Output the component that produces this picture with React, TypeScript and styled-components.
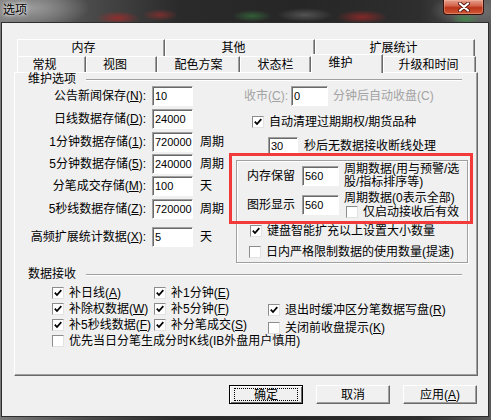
import React from 'react'
import styled, { createGlobalStyle } from 'styled-components'

const GlobalStyle = createGlobalStyle`
  html, body {
    margin: 0;
    padding: 0;
    background: #262626;
  }
  body {
    font-family: 'Liberation Sans', 'Noto Sans CJK SC', sans-serif;
    font-size: 12px;
    color: #000;
  }
  * {
    box-sizing: border-box;
  }
`

type Field = {
  label: string
  hotkey: string
  value: string
  unit?: string
  mt: number
}

const fields: Field[] = [
  { label: '公告新闻保存', hotkey: 'N', value: '10', mt: 0 },
  { label: '日线数据存储', hotkey: 'D', value: '24000', mt: 3 },
  { label: '1分钟数据存储', hotkey: '1', value: '720000', unit: '周期', mt: 3 },
  { label: '5分钟数据存储', hotkey: '5', value: '240000', unit: '周期', mt: 2 },
  { label: '分笔成交存储', hotkey: 'M', value: '100', unit: '天', mt: 2 },
  { label: '5秒线数据存储', hotkey: 'Z', value: '720000', unit: '周期', mt: 3 },
  { label: '高频扩展统计数据', hotkey: 'X', value: '5', unit: '天', mt: 8 },
]

const backTabs = [
  { name: '内存', w: 148, pr: 15 },
  { name: '其他', w: 150, pr: 13 },
  { name: '扩展统计', w: 160, pr: 3 },
]

const frontTabs = [
  { name: '常规', w: 69, pr: 14 },
  { name: '视图', w: 71, pr: 13 },
  { name: '配色方案', w: 83, pr: 0 },
  { name: '状态栏', w: 71, pr: 0 },
  { name: '维护', w: 72, pr: 13, active: true },
  { name: '升级和时间', w: 93, pr: 2 },
]

// text with an underlined access key, like 补日线(A)
const withKey = (text: string, key?: string) =>
  key ? (
    <>
      {text}(<u>{key}</u>)
    </>
  ) : (
    text
  )

function CheckMark() {
  return (
    <svg width='8' height='8' viewBox='0 0 8 8'>
      <path d='M0.8 3.6 L3 6 L7.3 1.2' fill='none' stroke='#000' strokeWidth='1.8' />
    </svg>
  )
}

function CheckBox({ checked, children }: { checked?: boolean; children?: React.ReactNode }) {
  return (
    <>
      <Box>{checked && <CheckMark />}</Box>
      {children && <CheckText>{children}</CheckText>}
    </>
  )
}

function CloseGlyph() {
  return (
    <svg width='14' height='10' viewBox='0 0 14 10'>
      <path d='M3 1.5 L11 8.5 M11 1.5 L3 8.5' stroke='#5a1a10' strokeWidth='4' strokeLinecap='round' />
      <path d='M3 1.5 L11 8.5 M11 1.5 L3 8.5' stroke='#fff' strokeWidth='2.2' strokeLinecap='round' />
    </svg>
  )
}

export default function App() {
  return (
    <>
      <GlobalStyle />
      <Window>
        <TitleBar>
          <Title>选项</Title>
          <CloseButton>
            <CloseGlyph />
          </CloseButton>
        </TitleBar>
        <Client>
          <TabControl>
            <TabRow $h={17}>
              {backTabs.map((t) => (
                <Tab key={t.name} $w={t.w} $pr={t.pr}>
                  {t.name}
                </Tab>
              ))}
            </TabRow>
            <TabRow $h={16}>
              {frontTabs.map((t) =>
                t.active ? (
                  <ActiveTab key={t.name} $w={t.w} $pr={t.pr}>
                    {t.name}
                  </ActiveTab>
                ) : (
                  <Tab key={t.name} $w={t.w} $pr={t.pr}>
                    {t.name}
                  </Tab>
                ),
              )}
            </TabRow>
            <Panel>
              <SectionHeader $mt={0}>
                <SectionLabel>维护选项</SectionLabel>
                <SectionLine />
              </SectionHeader>
              <Body>
                <LeftCol>
                  {fields.map((f) => (
                    <FieldRow key={f.label} $mt={f.mt}>
                      <FieldLabel>
                        {withKey(f.label, f.hotkey)}:
                      </FieldLabel>
                      <TextBox $w={41} $h={20} $ml={6} readOnly value={f.value} />
                      {f.unit && <Unit>{f.unit}</Unit>}
                    </FieldRow>
                  ))}
                </LeftCol>
                <RightCol>
                  <DisabledRow>
                    <DisabledLabel>{withKey('收市', 'C')}:</DisabledLabel>
                    <TextBox $w={37} $h={20} $ml={0} readOnly value='0' />
                    <DisabledText>分钟后自动收盘(C)</DisabledText>
                  </DisabledRow>
                  <CheckRow $mt={8} $pl={16}>
                    <CheckBox checked>自动清理过期期权/期货品种</CheckBox>
                  </CheckRow>
                  <TimeoutRow>
                    <TextBox $w={30} $h={18} $ml={0} readOnly value='30' />
                    <Unit $ml={6}>秒后无数据接收断线处理</Unit>
                  </TimeoutRow>
                  <InnerBox>
                    <MemRow $h={26} $mt={0}>
                      <MemLabel>内存保留</MemLabel>
                      <TextBox $w={37} $h={20} $ml={0} readOnly value='560' />
                      <Note $lh={13}>
                        <div>周期数据(用与预警/选</div>
                        <div>股/指标排序等)</div>
                      </Note>
                    </MemRow>
                    <MemRow $h={28} $mt={2}>
                      <MemLabel>图形显示</MemLabel>
                      <TextBox $w={37} $h={20} $ml={0} readOnly value='560' />
                      <Note $lh={14}>
                        <div>周期数据(0表示全部)</div>
                        <NoteCheck>
                          <CheckBox>仅启动接收后有效</CheckBox>
                        </NoteCheck>
                      </Note>
                    </MemRow>
                    <CheckRow $mt={4} $pl={13}>
                      <CheckBox checked>键盘智能扩充以上设置大小数量</CheckBox>
                    </CheckRow>
                    <CheckRow $mt={5} $pl={12}>
                      <CheckBox>日内严格限制数据的使用数量(提速)</CheckBox>
                    </CheckRow>
                  </InnerBox>
                  <Highlight />
                </RightCol>
              </Body>
              <SectionHeader $mt={5}>
                <SectionLabel>数据接收</SectionLabel>
                <SectionLine />
              </SectionHeader>
              <CheckArea>
                <CheckCol $w={102} $mt={0}>
                  <CheckItem $h={16}>
                    <CheckBox checked>{withKey('补日线', 'A')}</CheckBox>
                  </CheckItem>
                  <CheckItem $h={16}>
                    <CheckBox checked>{withKey('补除权数据', 'W')}</CheckBox>
                  </CheckItem>
                  <CheckItem $h={16}>
                    <CheckBox checked>{withKey('补5秒线数据', 'F')}</CheckBox>
                  </CheckItem>
                  <CheckItem $h={16}>
                    <CheckBox>优先当日分笔生成分时K线(IB外盘用户慎用)</CheckBox>
                  </CheckItem>
                </CheckCol>
                <CheckCol $w={114} $mt={0}>
                  <CheckItem $h={16}>
                    <CheckBox checked>{withKey('补1分钟', 'E')}</CheckBox>
                  </CheckItem>
                  <CheckItem $h={16}>
                    <CheckBox checked>{withKey('补5分钟', 'F')}</CheckBox>
                  </CheckItem>
                  <CheckItem $h={16}>
                    <CheckBox checked>{withKey('补分笔成交', 'S')}</CheckBox>
                  </CheckItem>
                </CheckCol>
                <CheckCol $w={190} $mt={16}>
                  <CheckItem $h={18}>
                    <CheckBox checked>{withKey('退出时缓冲区分笔数据写盘', 'R')}</CheckBox>
                  </CheckItem>
                  <CheckItem $h={18}>
                    <CheckBox>{withKey('关闭前收盘提示', 'K')}</CheckBox>
                  </CheckItem>
                </CheckCol>
              </CheckArea>
            </Panel>
          </TabControl>
          <ButtonRow>
            <Button $isDefault>
              <FocusRect>确定</FocusRect>
            </Button>
            <Button>取消</Button>
            <Button>{withKey('应用', 'A')}</Button>
          </ButtonRow>
        </Client>
      </Window>
    </>
  )
}

const Window = styled.div`
  width: 491px;
  height: 420px;
  display: flex;
  flex-direction: column;
  padding: 0 2px 3px 1px;
  background:
    radial-gradient(ellipse 22px 7px at 118px 18px, rgba(170, 40, 40, 0.75), transparent),
    radial-gradient(ellipse 18px 6px at 160px 15px, rgba(170, 45, 45, 0.6), transparent),
    radial-gradient(ellipse 20px 6px at 252px 16px, rgba(60, 140, 70, 0.55), transparent),
    radial-gradient(ellipse 28px 7px at 305px 15px, rgba(120, 120, 120, 0.55), transparent),
    radial-gradient(ellipse 26px 7px at 362px 17px, rgba(170, 40, 40, 0.7), transparent),
    radial-gradient(ellipse 14px 6px at 465px 19px, rgba(60, 150, 70, 0.7), transparent),
    radial-gradient(ellipse 60px 20px at 30px 8px, rgba(160, 160, 160, 0.9), transparent),
    radial-gradient(ellipse 40px 16px at 470px 10px, rgba(130, 130, 130, 0.8), transparent),
    linear-gradient(90deg, #7a7a7a 0, #4a4a4a 90px, #2a2a2a 180px, #262626 300px, #2e2e2e 420px, #5a5a5a 491px);
`

const TitleBar = styled.div`
  height: 22px;
  flex: none;
  display: flex;
  align-items: flex-start;
`

const Title = styled.div`
  margin: 3px 0 0 2px;
  line-height: 14px;
  text-shadow:
    0 0 3px #fff,
    0 0 6px rgba(255, 255, 255, 0.85);
`

const CloseButton = styled.div`
  margin-left: auto;
  margin-right: 5px;
  width: 41px;
  height: 15px;
  display: flex;
  align-items: center;
  justify-content: center;
  border: 1px solid #3a120c;
  border-top: none;
  border-radius: 0 0 4px 4px;
  background: linear-gradient(#e6a08e 0, #d4664e 40%, #bb3519 55%, #cf5a36 100%);
  box-shadow: inset 0 0 0 1px rgba(255, 200, 180, 0.35);
`

const Client = styled.div`
  flex: 1;
  border: 1px solid #2d2d2d;
  background: #f0f0f0;
  padding: 16px 0 0 12px;
`

const TabControl = styled.div`
  width: 464px;
  display: flex;
  flex-direction: column;
`

const TabRow = styled.div<{ $h: number }>`
  display: flex;
  align-items: flex-start;
  height: ${(p) => p.$h}px;
  padding-left: 3px;
`

const Tab = styled.div<{ $w: number; $pr: number }>`
  width: ${(p) => p.$w}px;
  height: 100%;
  flex: none;
  display: flex;
  align-items: center;
  justify-content: center;
  padding-right: ${(p) => p.$pr}px;
  line-height: 14px;
  white-space: nowrap;
  background: #f0f0f0;
  border-top: 1px solid #fff;
  border-left: 1px solid #fff;
  border-right: 1px solid #696969;
  box-shadow: inset -1px 0 0 #a0a0a0;
`

const ActiveTab = styled(Tab)`
  position: relative;
  z-index: 1;
  height: 19px;
  margin-top: -2px;
  align-items: flex-start;
  padding-top: 1px;
`

const Panel = styled.div`
  height: 304px;
  display: flex;
  flex-direction: column;
  border-top: 1px solid #fff;
  border-left: 1px solid #fff;
  border-right: 1px solid #696969;
  border-bottom: 1px solid #696969;
  box-shadow: inset -1px -1px 0 #a0a0a0;
`

const SectionHeader = styled.div<{ $mt: number }>`
  display: flex;
  align-items: center;
  height: 13px;
  margin-top: ${(p) => p.$mt}px;
  padding: 0 15px 0 13px;
`

const SectionLabel = styled.span`
  line-height: 13px;
  white-space: nowrap;
`

const SectionLine = styled.div`
  flex: 1;
  height: 2px;
  margin-left: 10px;
  border-top: 1px solid #a0a0a0;
  border-bottom: 1px solid #fff;
`

const Body = styled.div`
  display: flex;
`

const LeftCol = styled.div`
  width: 221px;
  display: flex;
  flex-direction: column;
`

const FieldRow = styled.div<{ $mt: number }>`
  display: flex;
  align-items: center;
  height: 20px;
  margin-top: ${(p) => p.$mt}px;
`

const FieldLabel = styled.span`
  width: 131px;
  flex: none;
  text-align: right;
  white-space: nowrap;
  line-height: 14px;
`

const TextBox = styled.input<{ $w: number; $h: number; $ml: number }>`
  width: ${(p) => p.$w}px;
  height: ${(p) => p.$h}px;
  margin: 0 0 0 ${(p) => p.$ml}px;
  flex: none;
  padding: 0 0 0 2px;
  font-family: 'Liberation Sans', sans-serif;
  font-size: 11px;
  color: #000;
  background: #fff;
  border: 1px solid;
  border-color: #a0a0a0 #fff #fff #a0a0a0;
  box-shadow: inset 1px 1px 0 #696969;
  outline: none;
`

const Unit = styled.span<{ $ml?: number }>`
  margin-left: ${(p) => p.$ml ?? 7}px;
  line-height: 14px;
  white-space: nowrap;
`

const RightCol = styled.div`
  position: relative;
  width: 232px;
  display: flex;
  flex-direction: column;
`

const DisabledRow = styled.div`
  display: flex;
  align-items: center;
  height: 20px;
  padding-left: 8px;
  color: #a3a3a3;
`

const DisabledLabel = styled.span`
  width: 47px;
  white-space: nowrap;
  line-height: 14px;
`

const DisabledText = styled.span`
  margin-left: 5px;
  white-space: nowrap;
  line-height: 14px;
`

const CheckRow = styled.div<{ $mt: number; $pl: number }>`
  display: flex;
  align-items: center;
  height: 16px;
  margin-top: ${(p) => p.$mt}px;
  padding-left: ${(p) => p.$pl}px;
`

const Box = styled.span`
  width: 12px;
  height: 12px;
  flex: none;
  display: flex;
  align-items: center;
  justify-content: center;
  background: #fff;
  border: 1px solid;
  border-color: #8c8c8c #e2e2e2 #e2e2e2 #8c8c8c;
`

const CheckText = styled.span`
  margin-left: 5px;
  line-height: 14px;
  white-space: nowrap;
`

const TimeoutRow = styled.div`
  display: flex;
  align-items: center;
  height: 18px;
  margin-top: 7px;
  padding-left: 32px;
`

const InnerBox = styled.div`
  height: 103px;
  margin-top: 5px;
  padding-top: 2px;
  display: flex;
  flex-direction: column;
  border: 1px solid #a0a0a0;
  box-shadow:
    inset 1px 1px 0 #fff,
    1px 1px 0 #fff;
`

const MemRow = styled.div<{ $h: number; $mt: number }>`
  display: flex;
  align-items: center;
  height: ${(p) => p.$h}px;
  margin-top: ${(p) => p.$mt}px;
  padding-left: 10px;
`

const MemLabel = styled.span`
  width: 55px;
  flex: none;
  white-space: nowrap;
  line-height: 14px;
`

const Note = styled.div<{ $lh: number }>`
  margin-left: 5px;
  line-height: ${(p) => p.$lh}px;
  white-space: nowrap;
`

const NoteCheck = styled.div`
  display: flex;
  align-items: center;
  margin-left: 2px;
`

const Highlight = styled.div`
  position: absolute;
  left: -7px;
  top: 67px;
  width: 244px;
  height: 71px;
  border: 3px solid #f23a3a;
  pointer-events: none;
`

const CheckArea = styled.div`
  display: flex;
  margin-top: 4px;
  padding-left: 37px;
`

const CheckCol = styled.div<{ $w: number; $mt: number }>`
  width: ${(p) => p.$w}px;
  flex: none;
  display: flex;
  flex-direction: column;
  margin-top: ${(p) => p.$mt}px;
`

const CheckItem = styled.div<{ $h: number }>`
  display: flex;
  align-items: center;
  height: ${(p) => p.$h}px;
`

const ButtonRow = styled.div`
  width: 463px;
  display: flex;
  justify-content: flex-end;
  gap: 13px;
  margin-top: 9px;
`

const Button = styled.div<{ $isDefault?: boolean }>`
  width: 74px;
  height: 19px;
  display: flex;
  align-items: center;
  justify-content: center;
  line-height: 14px;
  background: #f0f0f0;
  border: 1px solid;
  border-color: ${(p) => (p.$isDefault ? '#000' : '#fff #696969 #696969 #fff')};
  box-shadow: ${(p) =>
    p.$isDefault
      ? 'inset 1px 1px 0 #fff, inset -1px -1px 0 #696969'
      : 'inset -1px -1px 0 #a0a0a0'};
`

const FocusRect = styled.span`
  width: 64px;
  height: 13px;
  display: flex;
  align-items: center;
  justify-content: center;
  border: 1px dotted #000;
`
